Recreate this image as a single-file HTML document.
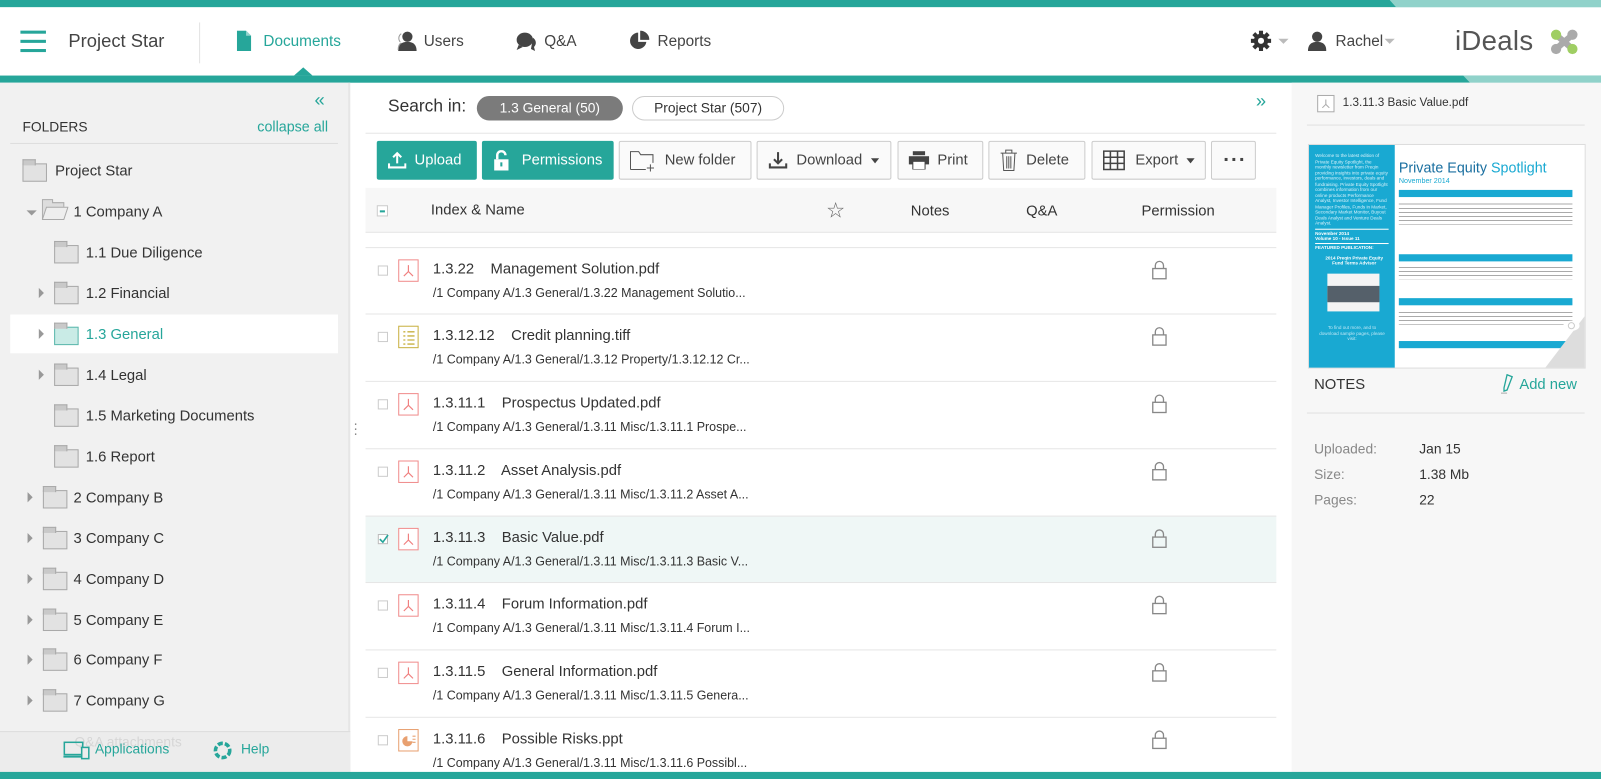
<!DOCTYPE html>
<html><head><meta charset="utf-8"><style>
*{box-sizing:border-box;margin:0;padding:0}
html,body{width:1601px;height:779px;overflow:hidden;background:#fff}
#w{position:absolute;left:0;top:0;width:1568px;height:763px;transform:scale(1.02105);transform-origin:0 0;font-family:"Liberation Sans",sans-serif;color:#444}
.a{position:absolute}
.t{position:absolute;white-space:nowrap}
.nav{font-size:15px;color:#444;top:32px}
.fold{position:absolute;width:24px;height:18px;background:#e2e2e2;border:1px solid #a9a9a9}
.fold:before{content:"";position:absolute;left:-1px;top:-5px;width:11px;height:5px;background:#c9c9c9;border:1px solid #a9a9a9;border-bottom:none}
.fl{font-size:14.5px;color:#333}
.tri{position:absolute;width:0;height:0;border-left:5px solid #999;border-top:5px solid transparent;border-bottom:5px solid transparent}
.btn{position:absolute;top:138px;height:38px;border:1px solid #ccc;background:#fafafa;font-size:14.5px;color:#444;display:flex;align-items:center;padding-left:10px;border-radius:2px}
.btn.g{background:#26a69a;border-color:#26a69a;color:#fff;font-weight:normal}
.row{position:absolute;left:358px;width:892px;height:66px;border-top:1px solid #e6e6e6}
.cb{position:absolute;left:12px;top:17px;width:10px;height:10px;border:1px solid #ccc;background:#fff}
.fi{position:absolute;left:32px;top:11px;width:20px;height:22px;border:1px solid #f08c8c;background:#fff}
.ti{position:absolute;left:66px;top:13px;font-size:14.5px;color:#333;white-space:nowrap}
.pa{position:absolute;left:66px;top:37px;font-size:12.2px;color:#333;white-space:nowrap}
.lk{position:absolute;left:770px;top:12px;width:15px;height:19px}
</style></head><body><div id="w">
<div class="a" style="left:0;top:0;width:1568px;height:7px;background:#26a69a"></div>
<div class="a" style="left:1361px;top:0;width:207px;height:7px;background:#90d2ca;clip-path:polygon(0 0,100% 0,100% 100%,3% 100%)"></div>
<div class="a" style="left:20px;top:30px;width:25px;height:3px;background:#26a69a"></div>
<div class="a" style="left:20px;top:39px;width:25px;height:3px;background:#26a69a"></div>
<div class="a" style="left:20px;top:48px;width:25px;height:3px;background:#26a69a"></div>
<div class="t" style="left:67px;top:30px;font-size:18px;color:#444">Project Star</div>
<div class="a" style="left:195px;top:22px;width:1px;height:40px;background:#e2e2e2"></div>
<svg class="a" style="left:232px;top:30px" width="14" height="20" viewBox="0 0 14 20"><path d="M0 0h9l5 5v15H0z" fill="#26a69a"/><path d="M9 0v5h5" fill="#fff" opacity=".5"/></svg>
<div class="t nav" style="left:258px;color:#26a69a">Documents</div>
<svg class="a" style="left:387px;top:30px" width="22" height="20" viewBox="0 0 22 20"><circle cx="12" cy="6" r="5" fill="#444"/><path d="M3 20c0-7 4-9 9-9s9 2 9 9z" fill="#444"/><path d="M6 3c-3 2-3 6-1 8M3 19c0-4 1-6 3-7" stroke="#999" fill="none"/></svg>
<div class="t nav" style="left:415px">Users</div>
<svg class="a" style="left:505px;top:31px" width="22" height="20" viewBox="0 0 22 20"><ellipse cx="9" cy="8" rx="8" ry="7" fill="#444"/><path d="M3 13l-2 5 6-3z" fill="#444"/><path d="M17 6c3 2 4 6 1 9l1 4-4-2" fill="#444"/></svg>
<div class="t nav" style="left:533px">Q&amp;A</div>
<svg class="a" style="left:616px;top:30px" width="20" height="20" viewBox="0 0 20 20"><path d="M9 2A8 8 0 1 0 17 11H9z" fill="#444"/><path d="M11 0v9h9A9 9 0 0 0 11 0z" fill="#444"/></svg>
<div class="t nav" style="left:644px">Reports</div>
<svg class="a" style="left:1225px;top:30px" width="20" height="20" viewBox="0 0 20 20"><g fill="#333"><circle cx="10" cy="10" r="7"/><rect x="8" y="0" width="4" height="20"/><rect x="0" y="8" width="20" height="4"/><rect x="8" y="0" width="4" height="20" transform="rotate(45 10 10)"/><rect x="8" y="0" width="4" height="20" transform="rotate(-45 10 10)"/></g><circle cx="10" cy="10" r="3" fill="#fff"/></svg>
<div class="a" style="left:1252px;top:38px;border-left:5px solid transparent;border-right:5px solid transparent;border-top:5px solid #bbb"></div>
<svg class="a" style="left:1281px;top:30px" width="18" height="20" viewBox="0 0 18 20"><circle cx="9" cy="6" r="5" fill="#444"/><path d="M0 20c0-7 4-9 9-9s9 2 9 9z" fill="#444"/></svg>
<div class="t nav" style="left:1308px">Rachel</div>
<div class="a" style="left:1356px;top:38px;border-left:5px solid transparent;border-right:5px solid transparent;border-top:5px solid #bbb"></div>
<div class="t" style="left:1425px;top:25px;font-size:27px;color:#555;letter-spacing:0.3px">iDeals</div>
<svg class="a" style="left:1518px;top:28px" width="28" height="26" viewBox="0 0 28 26"><path d="M7 7L21 19M21 7L7 19" stroke="#aaa" stroke-width="6"/><circle cx="6" cy="6" r="5" fill="#9fce63"/><circle cx="22" cy="20" r="5" fill="#9fce63"/><circle cx="22" cy="6" r="5" fill="#aaa"/><circle cx="6" cy="20" r="5" fill="#aaa"/></svg>
<div class="a" style="left:0;top:74px;width:1568px;height:7px;background:#26a69a"></div>
<div class="a" style="left:1433px;top:74px;width:135px;height:7px;background:#90d2ca;clip-path:polygon(0 0,100% 0,100% 100%,5% 100%)"></div>
<div class="a" style="left:288px;top:66px;border-left:9px solid transparent;border-right:9px solid transparent;border-bottom:8px solid #26a69a"></div>
<div class="a" style="left:0;top:81px;width:343px;height:675px;background:#f1f1f1;border-right:2px solid #e6e6e6"></div>
<div class="t" style="left:308px;top:88px;font-size:18px;color:#26a69a">«</div>
<div class="t" style="left:22px;top:117px;font-size:13.5px;color:#333">FOLDERS</div>
<div class="t" style="left:252px;top:116px;font-size:14px;color:#26a69a">collapse all</div>
<div class="a" style="left:10px;top:140px;width:321px;height:1px;background:#ddd"></div>
<div class="a" style="left:10px;top:308px;width:321px;height:38px;background:#fff"></div>
<div class="fold" style="left:22px;top:160px"></div><div class="t fl" style="left:54px;top:160px">Project Star</div>
<div class="a" style="left:26px;top:206px;border-left:5px solid transparent;border-right:5px solid transparent;border-top:5px solid #999"></div>
<svg class="a" style="left:41px;top:194px" width="26" height="22" viewBox="0 0 26 22"><path d="M.5 21V1.5h10v3h11v4" fill="#ddd" stroke="#aaa"/><path d="M.5 21l4-12h21l-4 12z" fill="#eee" stroke="#aaa"/></svg>
<div class="t fl" style="left:72px;top:200px">1 Company A</div>
<div class="fold" style="left:53px;top:240px"></div><div class="t fl" style="left:84px;top:240px">1.1 Due Diligence</div>
<div class="tri" style="left:38px;top:282px"></div><div class="fold" style="left:53px;top:280px"></div><div class="t fl" style="left:84px;top:280px">1.2 Financial</div>
<div class="tri" style="left:38px;top:322px"></div><div class="fold" style="left:53px;top:320px;background:#c9ebe6;border-color:#5cb8ad"></div><div class="t fl" style="left:84px;top:320px;color:#26a69a">1.3 General</div>
<div class="tri" style="left:38px;top:362px"></div><div class="fold" style="left:53px;top:360px"></div><div class="t fl" style="left:84px;top:360px">1.4 Legal</div>
<div class="fold" style="left:53px;top:400px"></div><div class="t fl" style="left:84px;top:400px">1.5 Marketing Documents</div>
<div class="fold" style="left:53px;top:440px"></div><div class="t fl" style="left:84px;top:440px">1.6 Report</div>
<div class="tri" style="left:27px;top:482px"></div><div class="fold" style="left:42px;top:480px"></div><div class="t fl" style="left:72px;top:480px">2 Company B</div>
<div class="tri" style="left:27px;top:522px"></div><div class="fold" style="left:42px;top:520px"></div><div class="t fl" style="left:72px;top:520px">3 Company C</div>
<div class="tri" style="left:27px;top:562px"></div><div class="fold" style="left:42px;top:560px"></div><div class="t fl" style="left:72px;top:560px">4 Company D</div>
<div class="tri" style="left:27px;top:602px"></div><div class="fold" style="left:42px;top:600px"></div><div class="t fl" style="left:72px;top:600px">5 Company E</div>
<div class="tri" style="left:27px;top:641px"></div><div class="fold" style="left:42px;top:639px"></div><div class="t fl" style="left:72px;top:639px">6 Company F</div>
<div class="tri" style="left:27px;top:681px"></div><div class="fold" style="left:42px;top:679px"></div><div class="t fl" style="left:72px;top:679px">7 Company G</div>
<div class="a" style="left:0;top:716px;width:343px;height:40px;background:#ececec;border-top:1px solid #ddd"></div>
<div class="t" style="left:73px;top:719px;font-size:13.5px;color:#d6d6d6">Q&amp;A attachments</div>
<svg class="a" style="left:62px;top:726px" width="26" height="18" viewBox="0 0 26 18"><rect x="1" y="1" width="18" height="12" fill="none" stroke="#26a69a" stroke-width="1.5"/><path d="M0 15h20" stroke="#26a69a" stroke-width="2"/><rect x="18" y="6" width="7" height="11" fill="#ececec" stroke="#26a69a" stroke-width="1.5"/></svg>
<div class="t" style="left:93px;top:726px;font-size:13.5px;color:#26a69a">Applications</div>
<svg class="a" style="left:209px;top:726px" width="18" height="18" viewBox="0 0 18 18"><circle cx="9" cy="9" r="7" fill="none" stroke="#26a69a" stroke-width="3.5" stroke-dasharray="5 2"/></svg>
<div class="t" style="left:236px;top:726px;font-size:13.5px;color:#26a69a">Help</div>
<div class="t" style="left:346px;top:412px;font-size:14px;color:#888;line-height:5px">·<br>·<br>·</div>
<div class="t" style="left:380px;top:94px;font-size:17px;color:#333">Search in:</div>
<div class="a" style="left:467px;top:94px;width:143px;height:24px;border-radius:12px;background:#7b7b7b;color:#fff;font-size:13.5px;text-align:center;line-height:24px">1.3 General (50)</div>
<div class="a" style="left:619px;top:94px;width:149px;height:24px;border-radius:12px;border:1px solid #ccc;color:#333;font-size:13.5px;text-align:center;line-height:22px">Project Star (507)</div>
<div class="t" style="left:1230px;top:89px;font-size:18px;color:#26a69a">»</div>
<div class="a" style="left:358px;top:130px;width:892px;height:1px;background:#e6e6e6"></div>
<div class="btn g" style="left:369px;width:98px">
<svg width="18" height="18" viewBox="0 0 18 18" style="margin-right:8px"><path d="M9 2v10M5 6l4-4 4 4" stroke="#fff" stroke-width="2" fill="none"/><path d="M1 12v4h16v-4" stroke="#fff" stroke-width="2" fill="none"/></svg>Upload</div>
<div class="btn g" style="left:472px;width:129px">
<svg width="16" height="20" viewBox="0 0 16 20" style="margin-right:12px"><path d="M4 9V5a4 4 0 0 1 8 0" stroke="#fff" stroke-width="2.4" fill="none"/><rect x="1" y="9" width="14" height="11" fill="#fff"/><rect x="7" y="12" width="2" height="4" fill="#26a69a"/></svg>Permissions</div>
<div class="btn" style="left:606px;width:130px">
<svg width="26" height="22" viewBox="0 0 26 22" style="margin-right:8px"><path d="M.5 20V2.5h8l2 3h12v8M.5 20h15" stroke="#555" fill="none"/><path d="M20 15v7M16.5 18.5h7" stroke="#555"/></svg>New folder</div>
<div class="btn" style="left:741px;width:132px">
<svg width="20" height="20" viewBox="0 0 20 20" style="margin-right:8px"><path d="M10 2v11M6 9l4 4 4-4" stroke="#444" stroke-width="2" fill="none"/><path d="M2 13v4h16v-4" stroke="#444" stroke-width="2" fill="none"/></svg>Download<span style="margin-left:8px;border-left:4px solid transparent;border-right:4px solid transparent;border-top:5px solid #444"></span></div>
<div class="btn" style="left:879px;width:84px">
<svg width="20" height="18" viewBox="0 0 20 18" style="margin-right:8px"><rect x="4" y="0" width="12" height="4" fill="#444"/><rect x="0" y="5" width="20" height="8" fill="#444"/><rect x="4" y="10" width="12" height="8" fill="#fff" stroke="#444"/></svg>Print</div>
<div class="btn" style="left:968px;width:95px">
<svg width="18" height="22" viewBox="0 0 18 22" style="margin-right:8px"><path d="M1 4h16M6 4V1h6v3M3 4l1 17h10l1-17M7 7v12M9 7v12M11 7v12" stroke="#555" fill="none"/></svg>Delete</div>
<div class="btn" style="left:1069px;width:112px">
<svg width="22" height="20" viewBox="0 0 22 20" style="margin-right:10px"><path d="M1 1h20v18H1zM1 7h20M1 13h20M7.5 1v18M14.5 1v18" stroke="#444" stroke-width="1.5" fill="none"/></svg>Export<span style="margin-left:8px;border-left:4px solid transparent;border-right:4px solid transparent;border-top:5px solid #444"></span></div>
<div class="btn" style="left:1186px;width:44px;font-size:20px;padding-left:11px;letter-spacing:1px;font-weight:bold;line-height:0">···</div>
<div class="a" style="left:358px;top:184px;width:892px;height:44px;background:#f7f7f7;border-bottom:1px solid #e6e6e6"></div>
<div class="a" style="left:369px;top:201px;width:11px;height:11px;border:1px solid #ccc;background:#fff"><div style="margin:4px 2px;width:5px;height:2px;background:#26a69a"></div></div>
<div class="t" style="left:422px;top:198px;font-size:14.5px;color:#333">Index &amp; Name</div>
<div class="t" style="left:809px;top:194px;font-size:21px;color:#666">☆</div>
<div class="t" style="left:892px;top:199px;font-size:14.5px;color:#333">Notes</div>
<div class="t" style="left:1005px;top:199px;font-size:14.5px;color:#333">Q&amp;A</div>
<div class="t" style="left:1118px;top:199px;font-size:14.5px;color:#333">Permission</div>

<svg width="0" height="0" style="position:absolute"><defs>
<symbol id="pdf" viewBox="0 0 20 22"><path d="M10 5v7l-5 5M10 12l5 5" stroke="#f08080" stroke-width="1.3" fill="none"/></symbol>
<symbol id="lk" viewBox="0 0 15 19"><path d="M3.5 8V5a4 4 0 0 1 8 0v3" stroke="#888" stroke-width="1.3" fill="none"/><rect x="1" y="8" width="13" height="10" fill="none" stroke="#888" stroke-width="1.3"/></symbol>
</defs></svg>

<div class="row" style="top:242px"><div class="cb"></div><div class="fi"><svg width="18" height="20"><use href="#pdf"/></svg></div><div class="ti">1.3.22&nbsp;&nbsp;&nbsp; Management Solution.pdf</div><div class="pa">/1 Company A/1.3 General/1.3.22 Management Solutio...</div><svg class="lk"><use href="#lk"/></svg></div>
<div class="row" style="top:307px"><div class="cb"></div><div class="fi" style="border-color:#c8b040"><svg width="18" height="20" viewBox="0 0 18 20"><path d="M4 5h2M8 5h7M4 9h2M8 9h7M4 13h2M8 13h7M4 17h2M8 17h7" stroke="#c8b040" stroke-width="1.3"/></svg></div><div class="ti">1.3.12.12&nbsp;&nbsp;&nbsp; Credit planning.tiff</div><div class="pa">/1 Company A/1.3 General/1.3.12 Property/1.3.12.12 Cr...</div><svg class="lk"><use href="#lk"/></svg></div>
<div class="row" style="top:373px"><div class="cb"></div><div class="fi"><svg width="18" height="20"><use href="#pdf"/></svg></div><div class="ti">1.3.11.1&nbsp;&nbsp;&nbsp; Prospectus Updated.pdf</div><div class="pa">/1 Company A/1.3 General/1.3.11 Misc/1.3.11.1 Prospe...</div><svg class="lk"><use href="#lk"/></svg></div>
<div class="row" style="top:439px"><div class="cb"></div><div class="fi"><svg width="18" height="20"><use href="#pdf"/></svg></div><div class="ti">1.3.11.2&nbsp;&nbsp;&nbsp; Asset Analysis.pdf</div><div class="pa">/1 Company A/1.3 General/1.3.11 Misc/1.3.11.2 Asset A...</div><svg class="lk"><use href="#lk"/></svg></div>
<div class="row" style="top:505px;background:#eff7f6"><div class="cb" style="border-color:#bbb"><svg width="10" height="10" viewBox="0 0 10 10" style="position:absolute;left:0;top:-1px"><path d="M1 5l3 3 5-7" stroke="#26a69a" stroke-width="1.6" fill="none"/></svg></div><div class="fi"><svg width="18" height="20"><use href="#pdf"/></svg></div><div class="ti">1.3.11.3&nbsp;&nbsp;&nbsp; Basic Value.pdf</div><div class="pa">/1 Company A/1.3 General/1.3.11 Misc/1.3.11.3 Basic V...</div><svg class="lk"><use href="#lk"/></svg></div>
<div class="row" style="top:570px"><div class="cb"></div><div class="fi"><svg width="18" height="20"><use href="#pdf"/></svg></div><div class="ti">1.3.11.4&nbsp;&nbsp;&nbsp; Forum Information.pdf</div><div class="pa">/1 Company A/1.3 General/1.3.11 Misc/1.3.11.4 Forum I...</div><svg class="lk"><use href="#lk"/></svg></div>
<div class="row" style="top:636px"><div class="cb"></div><div class="fi"><svg width="18" height="20"><use href="#pdf"/></svg></div><div class="ti">1.3.11.5&nbsp;&nbsp;&nbsp; General Information.pdf</div><div class="pa">/1 Company A/1.3 General/1.3.11 Misc/1.3.11.5 Genera...</div><svg class="lk"><use href="#lk"/></svg></div>
<div class="row" style="top:702px;height:54px;overflow:hidden"><div class="cb"></div><div class="fi" style="border-color:#e8a070"><svg width="18" height="20" viewBox="0 0 18 20"><path d="M8 6a5 5 0 1 0 5 5H8z" fill="#e8a070"/><path d="M13 6h3M13 9h3M13 12h3" stroke="#e8a070"/></svg></div><div class="ti">1.3.11.6&nbsp;&nbsp;&nbsp; Possible Risks.ppt</div><div class="pa">/1 Company A/1.3 General/1.3.11 Misc/1.3.11.6 Possibl...</div><svg class="lk"><use href="#lk"/></svg></div>

<div class="a" style="left:1265px;top:81px;width:303px;height:675px;background:#f7f7f7"></div>
<div class="a" style="left:1290px;top:93px;width:17px;height:17px;border:1px solid #aaa;background:#fff"><svg width="15" height="15" viewBox="0 0 20 22"><path d="M10 5v7l-5 5M10 12l5 5" stroke="#aaa" stroke-width="1.5" fill="none"/></svg></div>
<div class="t" style="left:1315px;top:95px;font-size:11.5px;color:#333">1.3.11.3 Basic Value.pdf</div>
<div class="a" style="left:1280px;top:122px;width:272px;height:1px;background:#e0e0e0"></div>
<div class="a" style="left:1281px;top:141px;width:272px;height:220px;background:#fff;border:1px solid #ddd;overflow:hidden">
 <div class="a" style="left:0;top:0;width:84px;height:220px;background:#19a9d2"></div>
 <div class="a" style="left:6px;top:8px;width:72px;font-size:4.5px;line-height:5.5px;color:#d8f2fb">Welcome to the latest edition of Private Equity Spotlight, the monthly newsletter from Preqin providing insights into private equity performance, investors, deals and fundraising. Private Equity Spotlight combines information from our online products Performance Analyst, Investor Intelligence, Fund Manager Profiles, Funds in Market, Secondary Market Monitor, Buyout Deals Analyst and Venture Deals Analyst.</div>
 <div class="a" style="left:6px;top:82px;width:72px;height:1px;background:#fff"></div>
 <div class="a" style="left:6px;top:84px;font-size:4.5px;color:#fff;font-weight:bold;line-height:5px">November 2014<br>Volume 10 - Issue 11</div>
 <div class="a" style="left:6px;top:96px;width:72px;height:1px;background:#fff"></div>
 <div class="a" style="left:6px;top:98px;font-size:4.5px;color:#fff;font-weight:bold">FEATURED PUBLICATION:</div>
 <div class="a" style="left:16px;top:108px;font-size:4.5px;color:#fff;font-weight:bold;text-align:center;line-height:5px">2014 Preqin Private Equity<br>Fund Terms Advisor</div>
 <div class="a" style="left:18px;top:126px;width:51px;height:37px;background:#f4f4f4"><div style="margin:12px 0 0 0;height:16px;background:#55606a"></div></div>
 <div class="a" style="left:10px;top:176px;font-size:4.5px;color:#bfe7f5;text-align:center;line-height:5.5px">To find out more, and to<br>download sample pages, please<br>visit:</div>
 <div class="t" style="left:88px;top:14px;font-size:14px;color:#1a6fa0">Private Equity <span style="color:#19a9d2">Spotlight</span></div>
 <div class="t" style="left:88px;top:32px;font-size:7px;color:#19a9d2">November 2014</div>
 <div class="a" style="left:88px;top:44px;width:170px;height:7px;background:#19a9d2"></div>
 <div class="a" style="left:88px;top:56px;width:170px;height:22px;background:repeating-linear-gradient(#fff 0 1.5px,#aaa 1.5px 2.5px,#fff 2.5px 4px)"></div>
 <div class="a" style="left:88px;top:107px;width:170px;height:7px;background:#19a9d2"></div>
 <div class="a" style="left:88px;top:118px;width:170px;height:14px;background:repeating-linear-gradient(#fff 0 1.5px,#aaa 1.5px 2.5px,#fff 2.5px 4px)"></div>
 <div class="a" style="left:88px;top:150px;width:170px;height:7px;background:#19a9d2"></div>
 <div class="a" style="left:88px;top:162px;width:170px;height:14px;background:repeating-linear-gradient(#fff 0 1.5px,#aaa 1.5px 2.5px,#fff 2.5px 4px)"></div>
 <div class="a" style="left:88px;top:192px;width:170px;height:7px;background:#19a9d2"></div>
 <div class="a" style="left:230px;top:165px;width:42px;height:55px;background:#ddd;clip-path:polygon(100% 0,100% 100%,0 100%)"></div>
 <svg class="a" style="left:248px;top:171px" width="18" height="12" viewBox="0 0 18 12"><ellipse cx="9" cy="6" rx="8" ry="5" fill="#fff"/><circle cx="9" cy="6" r="3" fill="none" stroke="#ccc"/></svg>
</div>
<div class="t" style="left:1287px;top:369px;font-size:14.5px;color:#333">NOTES</div>
<svg class="a" style="left:1470px;top:366px" width="14" height="20" viewBox="0 0 14 20"><path d="M6 1l5 2-5 13-3 1 0-3z" stroke="#26a69a" fill="none" stroke-width="1.3"/><path d="M0 19h6" stroke="#aaa"/></svg>
<div class="t" style="left:1488px;top:369px;font-size:14.5px;color:#26a69a">Add new</div>
<div class="a" style="left:1280px;top:404px;width:272px;height:1px;background:#e0e0e0"></div>
<div class="t" style="left:1287px;top:432px;font-size:13.5px;color:#888">Uploaded:</div><div class="t" style="left:1390px;top:432px;font-size:13.5px;color:#333">Jan 15</div>
<div class="t" style="left:1287px;top:457px;font-size:13.5px;color:#888">Size:</div><div class="t" style="left:1390px;top:457px;font-size:13.5px;color:#333">1.38 Mb</div>
<div class="t" style="left:1287px;top:482px;font-size:13.5px;color:#888">Pages:</div><div class="t" style="left:1390px;top:482px;font-size:13.5px;color:#333">22</div>
<div class="a" style="left:0;top:756px;width:1568px;height:7px;background:#26a69a"></div>
</div></body></html>
